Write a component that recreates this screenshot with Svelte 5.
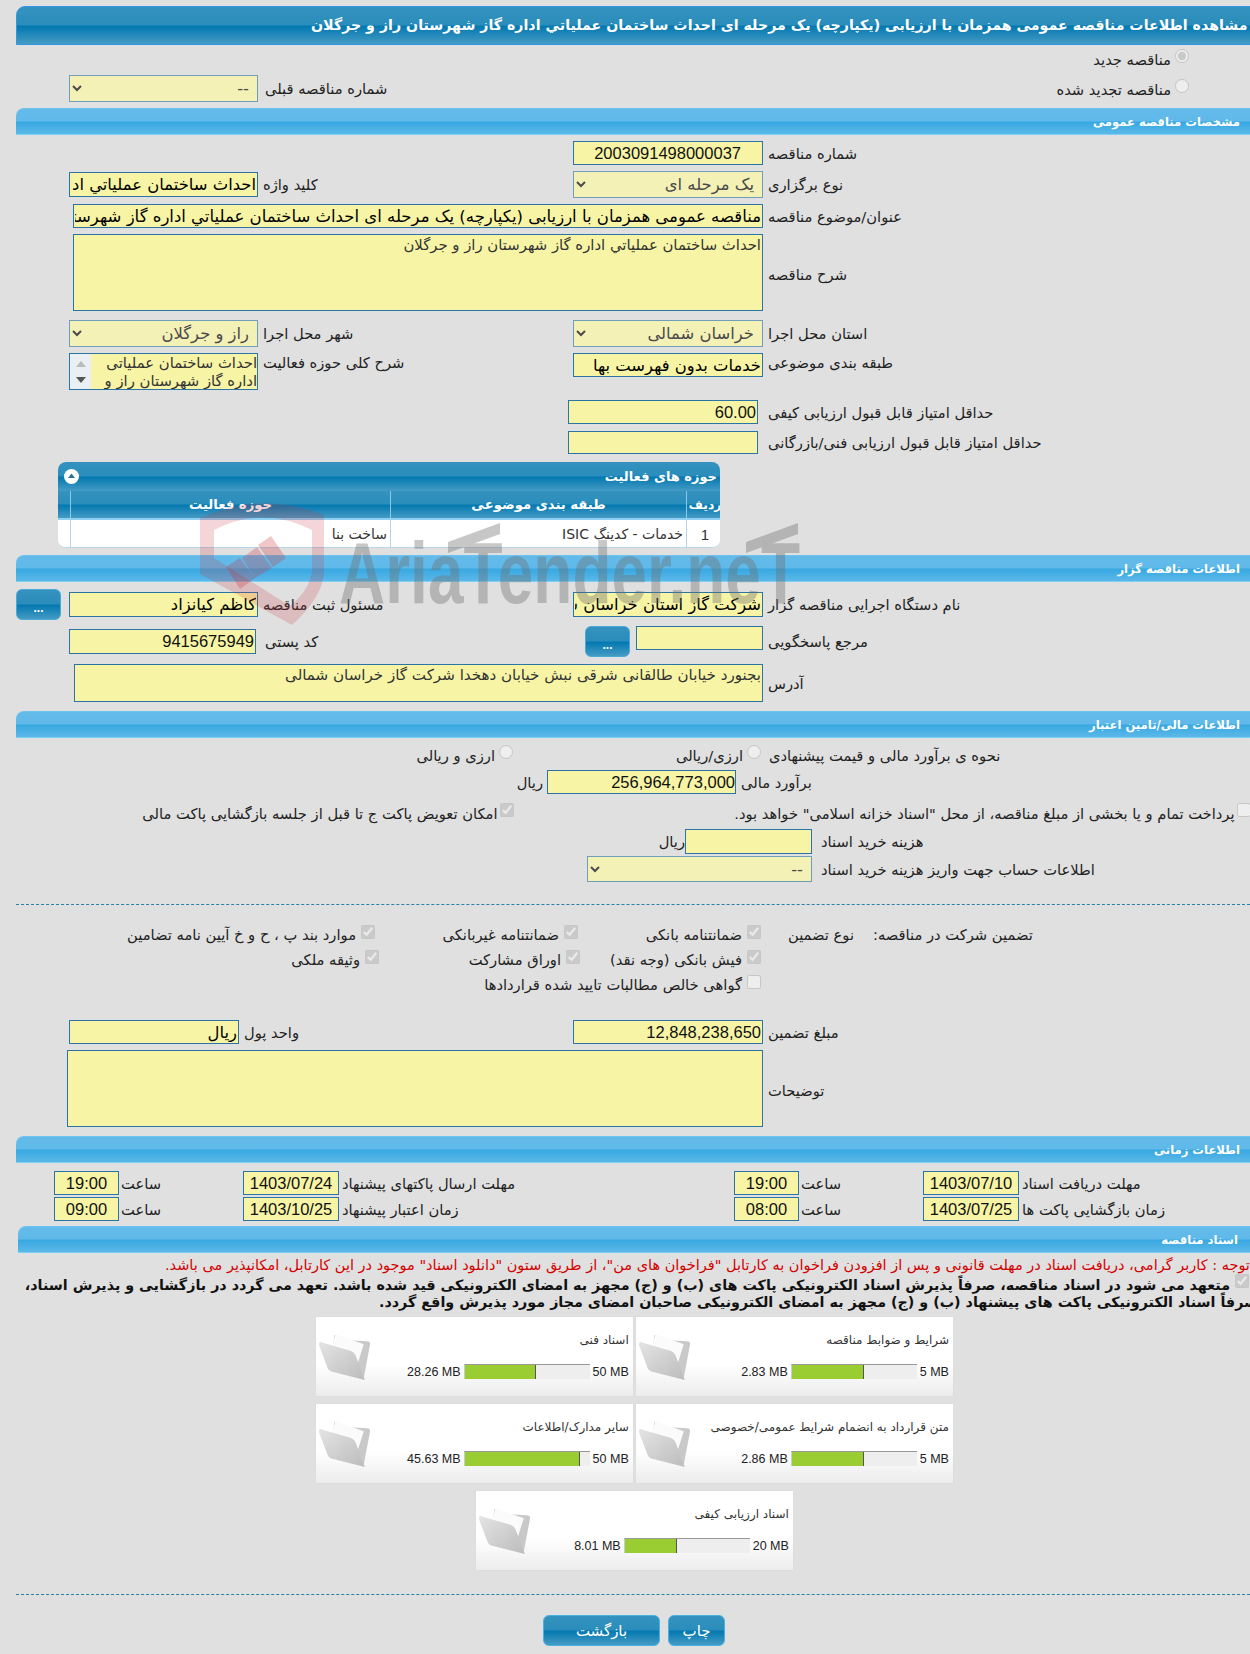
<script>
  const title = 'مناقصه عمومی همزمان با ارزیابی (یکپارچه) یک مرحله ای احداث ساختمان عملیاتي اداره گاز شهرستان راز و جرگلان';
  const desc = 'احداث ساختمان عملیاتي اداره گاز شهرستان راز و جرگلان';
  const cards = [
    { name: 'شرایط و ضوابط مناقصه', used: '2.83 MB', max: '5 MB', pct: 57.4 },
    { name: 'اسناد فنی', used: '28.26 MB', max: '50 MB', pct: 57 },
    { name: 'متن قرارداد به انضمام شرایط عمومی/خصوصی', used: '2.86 MB', max: '5 MB', pct: 58 },
    { name: 'سایر مدارک/اطلاعات', used: '45.63 MB', max: '50 MB', pct: 92 },
    { name: 'اسناد ارزیابی کیفی', used: '8.01 MB', max: '20 MB', pct: 42 }
  ];
</script>

<div class="page" dir="ltr">
  <div class="titlebar"><span dir="rtl">مشاهده اطلاعات {title}</span></div>

  <div class="row radio-one">
    <label class="radio" dir="rtl"><input type="radio" name="kind" checked disabled /><span>مناقصه جدید</span></label>
  </div>
  <div class="row radio-two">
    <select class="sel w189" dir="rtl" disabled><option>--</option></select>
    <span class="lab lab-prev" dir="rtl">شماره مناقصه قبلی</span>
    <label class="radio r2" dir="rtl"><input type="radio" name="kind" disabled /><span>مناقصه تجدید شده</span></label>
  </div>

  <div class="section s1"><span dir="rtl">مشخصات مناقصه عمومی</span></div>

  <div class="row t6 h24 pad573">
    <input class="fld w190 num pad20" dir="rtl" readonly value="2003091498000037" />
    <span class="lab l768" dir="rtl">شماره مناقصه</span>
  </div>
  <div class="row t6 h27 pad69">
    <input class="fld w189 h25" dir="rtl" readonly value={desc} />
    <span class="lab l315" dir="rtl">کلید واژه</span>
    <select class="sel w190" dir="rtl" disabled><option>یک مرحله ای</option></select>
    <span class="lab l768" dir="rtl">نوع برگزاری</span>
  </div>
  <div class="row t6 h24 pad73">
    <input class="fld w690 big" dir="rtl" readonly value={title} />
    <span class="lab l768" dir="rtl">عنوان/موضوع مناقصه</span>
  </div>
  <div class="row t6 h77 pad73">
    <textarea class="fld area w690 h77" dir="rtl" readonly>{desc}</textarea>
    <span class="lab l768 down" dir="rtl">شرح مناقصه</span>
  </div>
  <div class="row t9 h27 pad69">
    <select class="sel w189" dir="rtl" disabled><option>راز و جرگلان</option></select>
    <span class="lab l315" dir="rtl">شهر محل اجرا</span>
    <select class="sel w190" dir="rtl" disabled><option>خراسان شمالی</option></select>
    <span class="lab l768" dir="rtl">استان محل اجرا</span>
  </div>
  <div class="row t6 h37 top pad69">
    <div class="list">
      <div class="scroll">
        <svg width="10" height="6" viewBox="0 0 10 6"><path d="M5 0 10 6H0z" fill="#bbb" /></svg>
        <svg width="10" height="6" viewBox="0 0 10 6"><path d="M5 6 10 0H0z" fill="#555" /></svg>
      </div>
      <div class="listtext" dir="rtl">احداث ساختمان عملیاتی اداره گاز شهرستان راز و</div>
    </div>
    <span class="lab l315 up" dir="rtl">شرح کلی حوزه فعالیت</span>
    <input class="fld w190" dir="rtl" readonly value="خدمات بدون فهرست بها" />
    <span class="lab l768 up" dir="rtl">طبقه بندی موضوعی</span>
  </div>
  <div class="row t10 h24 pad568">
    <input class="fld w190 num" dir="rtl" readonly value="60.00" />
    <span class="lab l768b" dir="rtl">حداقل امتیاز قابل قبول ارزیابی کیفی</span>
  </div>
  <div class="row t7 h23 pad568">
    <input class="fld w190 h23" dir="rtl" readonly value="" />
    <span class="lab l768b" dir="rtl">حداقل امتیاز قابل قبول ارزیابی فنی/بازرگانی</span>
  </div>

  <div class="panel">
    <div class="panelhead" dir="rtl">
      <span>حوزه های فعالیت</span>
      <svg width="15" height="15" viewBox="0 0 15 15"><circle cx="7.5" cy="7.5" r="7.5" fill="#fff" /><path d="M7.5 4.5 11 9H4z" fill="#2d6f93" /></svg>
    </div>
    <table dir="rtl">
      <thead>
        <tr><th class="c-a">ردیف</th><th class="c-b">طبقه بندی موضوعی</th><th class="c-c">حوزه فعالیت</th><th class="c-d"></th></tr>
      </thead>
      <tbody>
        <tr><td class="ctr num-cell">1</td><td>خدمات - کدینگ ISIC</td><td>ساخت بنا</td><td></td></tr>
      </tbody>
    </table>
  </div>

  <div class="section s2"><span dir="rtl">اطلاعات مناقصه گزار</span></div>

  <div class="row t7 h31 pad69">
    <button class="dots b16" type="button">...</button>
    <input class="fld w189 h25" dir="rtl" readonly value="کاظم کیانزاد" />
    <span class="lab l315" dir="rtl">مسئول ثبت مناقصه</span>
    <input class="fld w190 h25" dir="rtl" readonly value="شرکت گاز استان خراسان شمالی" />
    <span class="lab l768" dir="rtl">نام دستگاه اجرایی مناقصه گزار</span>
  </div>
  <div class="row t6 h31 pad69">
    <input class="fld w187 h25 num" dir="rtl" readonly value="9415675949" />
    <span class="lab l329" dir="rtl">کد پستی</span>
    <button class="dots" type="button">...</button>
    <input class="fld w127 h24 tofs" dir="rtl" readonly value="" />
    <span class="lab l768" dir="rtl">مرجع پاسخگویی</span>
  </div>
  <div class="row t7 h38 pad74">
    <textarea class="fld area addr w689 h38" dir="rtl" readonly>بجنورد خیابان طالقانی شرقی نبش خیابان دهخدا شرکت گاز خراسان شمالی</textarea>
    <span class="lab l768" dir="rtl">آدرس</span>
  </div>

  <div class="section s3"><span dir="rtl">اطلاعات مالی/تامین اعتبار</span></div>

  <div class="row t7 h20 pad69">
    <label class="radio r3" dir="rtl"><input type="radio" name="cur" disabled /><span>ارزی و ریالی</span></label>
    <label class="radio r4" dir="rtl"><input type="radio" name="cur" disabled /><span>ارزی/ریالی</span></label>
    <span class="lab gap8" dir="rtl">نحوه ی برآورد مالی و قیمت پیشنهادی</span>
  </div>
  <div class="row t5 h24 pad69">
    <span class="lab rial" dir="rtl">ریال</span>
    <input class="fld w189 num bignum" dir="rtl" readonly value="256,964,773,000" />
    <span class="lab gap5" dir="rtl">برآورد مالی</span>
  </div>
  <div class="row t9 h20 pad69">
    <label class="check tight c-swap" dir="rtl"><input type="checkbox" checked disabled /><span>امکان تعویض پاکت ج تا قبل از جلسه بازگشایی پاکت مالی</span></label>
    <label class="check tight c-pay" dir="rtl"><input type="checkbox" disabled /><span>پرداخت تمام و یا بخشی از مبلغ مناقصه، از محل "اسناد خزانه اسلامی" خواهد بود.</span></label>
  </div>
  <div class="row t6 h25 pad69">
    <span class="lab rial2" dir="rtl">ریال</span>
    <input class="fld w127 h25" dir="rtl" readonly value="" />
    <span class="lab gap9" dir="rtl">هزینه خرید اسناد</span>
  </div>
  <div class="row t2 h26 pad587">
    <select class="sel w225 h26" dir="rtl" disabled><option>--</option></select>
    <span class="lab gap9" dir="rtl">اطلاعات حساب جهت واریز هزینه خرید اسناد</span>
  </div>

  <div class="rule r-a"></div>

  <div class="row t17 h25">
    <label class="check cA" dir="rtl"><input type="checkbox" checked disabled /><span>موارد بند پ ، ح و خ آیین نامه تضامین</span></label>
    <label class="check cB" dir="rtl"><input type="checkbox" checked disabled /><span>ضمانتنامه غیربانکی</span></label>
    <label class="check cC" dir="rtl"><input type="checkbox" checked disabled /><span>ضمانتنامه بانکی</span></label>
    <span class="lab gt" dir="rtl">نوع تضمین</span>
    <span class="lab gt2" dir="rtl">تضمین شرکت در مناقصه:</span>
  </div>
  <div class="row h25">
    <label class="check cA2" dir="rtl"><input type="checkbox" checked disabled /><span>وثیقه ملکی</span></label>
    <label class="check cB2" dir="rtl"><input type="checkbox" checked disabled /><span>اوراق مشارکت</span></label>
    <label class="check cC2" dir="rtl"><input type="checkbox" checked disabled /><span>فیش بانکی (وجه نقد)</span></label>
  </div>
  <div class="row h25">
    <label class="check c3" dir="rtl"><input type="checkbox" disabled /><span>گواهی خالص مطالبات تایید شده قراردادها</span></label>
  </div>

  <div class="row t23 h24 pad69">
    <input class="fld w170" dir="rtl" readonly value="ریال" />
    <span class="lab l334" dir="rtl">واحد پول</span>
    <input class="fld w190 num" dir="rtl" readonly value="12,848,238,650" />
    <span class="lab l768" dir="rtl">مبلغ تضمین</span>
  </div>
  <div class="row t6 h77 pad67">
    <textarea class="fld area w696 h77" dir="rtl" readonly></textarea>
    <span class="lab l768 down" dir="rtl">توضیحات</span>
  </div>

  <div class="section s4"><span dir="rtl">اطلاعات زمانی</span></div>

  <div class="row t8 h24 timerow">
    <input class="fld time" dir="rtl" readonly value="19:00" />
    <span class="lab t-s" dir="rtl">ساعت</span>
    <input class="fld date" dir="rtl" readonly value="1403/07/24" />
    <span class="lab t-l1" dir="rtl">مهلت ارسال پاکتهای پیشنهاد</span>
    <input class="fld time" dir="rtl" readonly value="19:00" />
    <span class="lab t-s" dir="rtl">ساعت</span>
    <input class="fld date" dir="rtl" readonly value="1403/07/10" />
    <span class="lab t-l2" dir="rtl">مهلت دریافت اسناد</span>
  </div>
  <div class="row t2 h24 timerow">
    <input class="fld time" dir="rtl" readonly value="09:00" />
    <span class="lab t-s" dir="rtl">ساعت</span>
    <input class="fld date" dir="rtl" readonly value="1403/10/25" />
    <span class="lab t-l1" dir="rtl">زمان اعتبار پیشنهاد</span>
    <input class="fld time" dir="rtl" readonly value="08:00" />
    <span class="lab t-s" dir="rtl">ساعت</span>
    <input class="fld date" dir="rtl" readonly value="1403/07/25" />
    <span class="lab t-l2" dir="rtl">زمان بازگشایی پاکت ها</span>
  </div>

  <div class="section s5"><span dir="rtl">اسناد مناقصه</span></div>

  <p class="notice"><span dir="rtl">توجه : کاربر گرامی، دریافت اسناد در مهلت قانونی و پس از افزودن فراخوان به کارتابل "فراخوان های من"، از طریق ستون "دانلود اسناد" موجود در این کارتابل، امکانپذیر می باشد.</span></p>
  <div class="pledge one" dir="rtl">
    <input type="checkbox" checked disabled />
    <span>متعهد می شود در اسناد مناقصه، صرفاً پذیرش اسناد الکترونیکی پاکت های (ب) و (ج) مجهز به امضای الکترونیکی قید شده باشد. تعهد می گردد در بازگشایی و پذیرش اسناد،</span>
  </div>
  <p class="pledge two"><span dir="rtl">صرفاً اسناد الکترونیکی پاکت های پیشنهاد (ب) و (ج) مجهز به امضای الکترونیکی صاحبان امضای مجاز مورد پذیرش واقع گردد.</span></p>

  <div class="cards" dir="rtl">
    {#each cards as c}
      <div class="card" dir="ltr">
        <svg class="folder" width="57" height="49" viewBox="0 0 56 48">
          <defs>
            <linearGradient id="fold" x1="0" y1="0" x2="1" y2="1">
              <stop offset="0" stop-color="#e4e4e4" />
              <stop offset="1" stop-color="#bcbcbc" />
            </linearGradient>
          </defs>
          <path d="M15 2 29 7 47 8Q51 8 50 12L44 44 30 30 14 12Z" fill="#c9c9c9" />
          <path d="M16 1 44 11 38 30 13 14Z" fill="#fbfbfb" />
          <path d="M2 9 30 17Q34 18 36 22L45 46 13 38Q9 37 8 33L0 12Q0 8 2 9Z" fill="url(#fold)" />
        </svg>
        <div class="cardbody">
          <div class="cardname" dir="rtl">{c.name}</div>
          <div class="meter">
            <span>{c.used}</span>
            <div class="bar"><div class="fill" style="width:{c.pct}%"></div></div>
            <span>{c.max}</span>
          </div>
        </div>
      </div>
    {/each}
  </div>

  <div class="rule r-b"></div>

  <div class="actions">
    <button class="btn wide" type="button">بازگشت</button>
    <button class="btn" type="button">چاپ</button>
  </div>

  <svg class="mark" width="1250" height="1654" viewBox="0 0 1250 1654">
    <path fill="#c8323c" fill-opacity=".2" fill-rule="evenodd" d="M200 518Q262 490 324 515V575Q320 600 292 625L200 574ZM214 530V558L290 606Q310 590 312 570V530Q262 505 214 530Z" />
    <path fill="#c8323c" fill-opacity=".28" d="M226 567 240 558 255 578 240 589ZM242 558 257 547 272 568 255 578ZM258 545 271 536 286 558 273 567Z" />
    <g class="markgroup">
      <text x="339" y="603" textLength="461" lengthAdjust="spacingAndGlyphs" class="marktext">AriaTender.neT</text>
      <path d="M448 542 500 523V534L448 553ZM746 542 798 523V534L746 553Z" fill="#6e6e6e" />
    </g>
  </svg>
</div>

<style>
  :global(body) { margin: 0; background: #e0e0e0; }
  .page {
    position: relative;
    width: 1250px;
    height: 1654px;
    overflow: hidden;
    background: #e0e0e0;
    font-family: "DejaVu Sans", sans-serif;
    font-size: 14.7px;
    color: #222;
  }
  .titlebar, .panelhead, th, .btn, .dots {
    background: linear-gradient(#3592be 0, #2a8dbb 48%, #0378b0 52%, #459bc4 100%);
  }
  .titlebar {
    margin: 6px 0 0 16px;
    width: 1300px;
    height: 39px;
    box-sizing: border-box;
    border: 1px solid #2f98e0;
    border-radius: 9px 0 0 0;
    padding-left: 294px;
    color: #fff;
    font-weight: bold;
    font-size: 14.2px;
    line-height: 36px;
    white-space: nowrap;
  }
  .section {
    background: linear-gradient(#64bbea 0, #5fb9e9 48%, #38a8e1 52%, #5bb8e8 100%);
    margin-left: 16px;
    width: 1234px;
    height: 27px;
    box-sizing: border-box;
    border-top: 1px solid #6cc3ef;
    border-bottom: 1px solid #7fd0f5;
    border-radius: 8px 0 0 0;
    color: #fff;
    font-size: 11.6px;
    font-weight: bold;
    line-height: 26px;
    text-align: right;
    padding-right: 10px;
  }
  .s1 { margin-top: 6px; }
  .s2 { margin-top: 7px; }
  .s3 { margin-top: 9px; }
  .s4 { margin-top: 9px; }
  .s5 { margin-top: 5px; margin-left: 18px; width: 1232px; padding-right: 12px; }

  .row { display: flex; align-items: center; white-space: nowrap; }
  .top { align-items: flex-start; }
  .radio-one { height: 28px; justify-content: flex-end; padding-right: 61px; }
  .radio-two { margin-top: 2px; height: 27px; padding-left: 69px; padding-right: 61px; }
  .pad69 { padding-left: 69px; }
  .pad73 { padding-left: 73px; }
  .pad74 { padding-left: 74px; }
  .pad67 { padding-left: 67px; }
  .pad568 { padding-left: 568px; }
  .pad573 { padding-left: 573px; }
  .pad587 { padding-left: 587px; }
  .timerow { padding-left: 54px; }
  .t2 { margin-top: 2px; } .t5 { margin-top: 5px; } .t6 { margin-top: 6px; } .t7 { margin-top: 7px; }
  .t8 { margin-top: 8px; } .t9 { margin-top: 9px; } .t10 { margin-top: 10px; } .t17 { margin-top: 17px; } .t23 { margin-top: 23px; }
  .h20 { height: 20px; } .h23 { height: 23px; } .h24 { height: 24px; } .h25 { height: 25px; } .h26 { height: 26px; }
  .h27 { height: 27px; } .h31 { height: 31px; } .h37 { height: 37px; } .h38 { height: 38px; } .h77 { height: 77px; }

  .fld, .sel {
    box-sizing: border-box;
    margin: 0;
    flex: none;
    font-family: "DejaVu Sans", sans-serif;
    font-size: 16.4px;
    padding: 0 1px;
    color: #000;
  }
  .big { font-size: 16.5px; }
  .fld { height: 24px; background: #f7f5a5; border: 1px solid #2a74a6; border-radius: 0; outline: none; }
  .fld.h23 { height: 23px; } .fld.h25 { height: 25px; } .fld.h38 { height: 38px; } .fld.h77 { height: 77px; }
  .sel { height: 27px; background: #f4f1b6; border: 1px solid #6f9fb8; color: #4a4a4a; border-radius: 0; padding-right: 4px; opacity: 1; }
  .sel.h26 { height: 26px; }
  .area { resize: none; font-size: 14.85px; line-height: 19px; color: #333; padding: 1px 1px; overflow: hidden; display: block; }
  .addr { font-size: 15.1px; }
  .num { font-family: "Liberation Sans", sans-serif; font-size: 16.5px; padding-right: 1px; color: #111; }
  .pad20 { padding-right: 21px; }
  .bignum { padding-right: 0; }
  .w127 { width: 127px; } .w170 { width: 170px; } .w187 { width: 187px; } .w189 { width: 189px; } .w190 { width: 190px; }
  .w225 { width: 225px; } .w689 { width: 689px; } .w690 { width: 690px; } .w696 { width: 696px; }
  .tofs { align-self: flex-start; margin-left: 6px; }

  .lab { display: block; flex: none; text-align: left; box-sizing: border-box; }
  .lab-prev { padding-left: 7px; }
  .l315 { width: 315px; padding-left: 5px; }
  .l329 { width: 329px; padding-left: 9px; }
  .l334 { width: 334px; padding-left: 5px; }
  .l768 { padding-left: 5px; }
  .l768b { padding-left: 10px; }
  .up { line-height: 20px; }
  .down { padding-top: 4px; }

  .radio, .check { display: inline-flex; align-items: center; flex: none; }
  .radio { gap: 4px; }
  .check { gap: 5px; }
  .check.tight { gap: 2.5px; }
  .radio input, .check input { margin: 0; width: 14px; height: 14px; flex: none; position: relative; top: -3px; }
  .r2 { margin-left: auto; margin-top: 1px; }

  .list { width: 189px; height: 37px; box-sizing: border-box; background: #f7f5a5; border: 1px solid #2a74a6; display: flex; flex: none; overflow: hidden; }
  .scroll { width: 21px; flex: none; background: #e9eff2; display: flex; flex-direction: column; align-items: center; justify-content: center; gap: 10px; }
  .listtext { flex: 1; font-size: 14.8px; line-height: 18px; color: #333; white-space: normal; }

  .panel {
    margin: 8px 0 0 58px;
    width: 662px;
    height: 86px;
    box-sizing: border-box;
    border-radius: 8px;
    overflow: hidden;
    background: #fff;
    border-bottom: 1px solid #b6d5e8;
  }
  .panelhead {
    height: 29px;
    display: flex;
    align-items: center;
    justify-content: space-between;
    padding: 0 3px 0 6px;
    color: #fff;
    font-weight: bold;
    font-size: 13px;
  }
  table { width: 662px; border-collapse: collapse; table-layout: fixed; font-size: 14px; }
  th { height: 27px; padding: 0; color: #fff; font-size: 13.2px; border-left: 1px solid #8cc8e8; border-bottom: 2px solid #8fd0f3; }
  th:last-child { border-left: 0; }
  th.c-a { font-size: 12.4px; }
  td { height: 28px; padding: 0 3px 0 0; border-left: 1px solid #b5d3e6; color: #333; background: #fff; }
  td:last-child { border-left: 0; }
  .ctr { text-align: center; padding: 0; }
  .num-cell { font-family: "Liberation Sans", sans-serif; font-size: 15px; }
  .c-a { width: 36px; } .c-b { width: 295px; } .c-c { width: 319px; } .c-d { width: 12px; }

  .dots {
    flex: none;
    width: 45px;
    height: 31px;
    padding: 7px 0 0;
    border: 1px solid #4aa9d6;
    border-radius: 6px;
    color: #fff;
    font-weight: bold;
    font-size: 12px;
    font-family: "Liberation Sans", sans-serif;
  }
  .b16 { margin: 0 8px 0 -53px; }

  .r3 { width: 444px; }
  .r4 { width: 248px; }
  .gap8 { padding-left: 8px; }
  .gap5 { padding-left: 5px; }
  .gap9 { padding-left: 9px; }
  .rial { margin-left: 448px; width: 30px; text-align: right; padding-right: 4px; }
  .rial2 { margin-left: 593px; width: 23px; text-align: right; }
  .c-swap { width: 445px; }
  .c-pay { width: 737px; }

  .rule { height: 0; border-top: 1px dashed #2b7fa8; margin-left: 16px; }
  .r-a { margin-top: 22px; }
  .r-b { margin-top: 24px; }

  .cA { width: 375px; } .cB { width: 203px; } .cC { width: 183px; }
  .cA2 { width: 379px; } .cB2 { width: 201px; } .cC2 { width: 181px; }
  .c3 { width: 761px; }
  .gt { width: 112px; padding-left: 27px; }

  .time { width: 65px; font-family: "Liberation Sans", sans-serif; font-size: 16.5px; text-align: center; color: #111; }
  .date { width: 96px; font-family: "Liberation Sans", sans-serif; font-size: 16.5px; text-align: center; color: #111; }
  .t-s { width: 124px; padding-left: 2px; }
  .t-l1 { width: 395px; padding-left: 3px; }
  .t-l2 { padding-left: 3px; }

  p { margin: 0; }
  .notice { margin-top: 3px; height: 18px; padding-left: 165px; white-space: nowrap; color: #d40000; font-size: 14.5px; line-height: 18px; }
  .pledge { font-weight: bold; color: #111; font-size: 14.3px; white-space: nowrap; line-height: 17px; }
  .pledge.one { margin-top: 2px; display: flex; align-items: center; gap: 5px; padding-right: 1px; height: 18px; }
  .pledge.one input { margin: 0; width: 14px; height: 14px; flex: none; position: relative; top: -4px; }
  .pledge.two { padding-left: 379px; }

  .cards { margin: 6px 0 0 316px; width: 637px; display: flex; flex-wrap: wrap; justify-content: center; gap: 8px 3.5px; }
  .card {
    width: 316.7px;
    height: 79px;
    box-sizing: border-box;
    background: linear-gradient(#fff 60%, #ececec 100%);
    box-shadow: 0 0 1px #cfcfcf;
    display: flex;
    padding: 16px 4px 0 3px;
  }
  .folder { flex: none; }
  .cardbody { flex: 1; min-width: 0; display: flex; flex-direction: column; align-items: flex-end; margin-top: -2px; }
  .cardname { font-size: 12px; line-height: 18px; white-space: nowrap; color: #333; }
  .meter { margin-top: 15px; display: flex; align-items: center; gap: 3px; font-family: "Liberation Sans", sans-serif; font-size: 12.5px; color: #222; }
  .bar { width: 126px; height: 15px; box-sizing: border-box; background: #eee; border-top: 1px solid #999; border-left: 1px solid #ccc; }
  .fill { height: 14px; background: #9acd32; border-right: 1px solid #555; box-sizing: border-box; }

  .actions { margin: 20px 0 0 543px; display: flex; gap: 8px; }
  .btn {
    width: 57px;
    height: 31px;
    padding: 0;
    border: 1px solid #47b2e2;
    border-radius: 6px;
    color: #fff;
    font-family: "DejaVu Sans", sans-serif;
    font-size: 15px;
  }
  .wide { width: 117px; }

  .mark { position: absolute; left: 0; top: 0; pointer-events: none; }
  .markgroup { opacity: .38; }
  .marktext {
    font-family: "Liberation Sans", sans-serif;
    font-weight: bold;
    font-size: 88px;
    fill: #6e6e6e;
  }
</style>
